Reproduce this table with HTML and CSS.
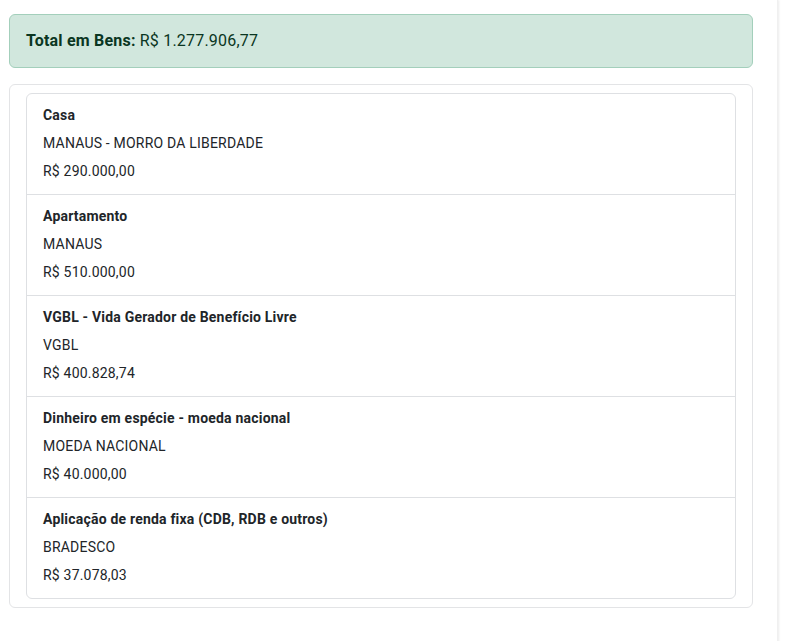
FILE: index.html
```html
<!DOCTYPE html>
<html lang="pt-BR">
  <head>
    <meta charset="UTF-8" />
    <meta name="viewport" content="width=device-width, initial-scale=1.0" />
    <title>Bens</title>
    <link rel="stylesheet" href="styles.css">
  </head>
  <body>
    <div class="page">
      <!-- Total -->
      <div class="alert-total">
        <strong>Total em Bens:</strong> R$ 1.277.906,77
      </div>

      <!-- Lista de bens -->
      <div class="card">
        <ul class="bens-list">
          <li class="bem">
            <p class="bem-title">Casa</p>
            <p>MANAUS - MORRO DA LIBERDADE</p>
            <p>R$ 290.000,00</p>
          </li>
          <li class="bem">
            <p class="bem-title">Apartamento</p>
            <p>MANAUS</p>
            <p>R$ 510.000,00</p>
          </li>
          <li class="bem">
            <p class="bem-title">VGBL - Vida Gerador de Benefício Livre</p>
            <p>VGBL</p>
            <p>R$ 400.828,74</p>
          </li>
          <li class="bem">
            <p class="bem-title">Dinheiro em espécie - moeda nacional</p>
            <p>MOEDA NACIONAL</p>
            <p>R$ 40.000,00</p>
          </li>
          <li class="bem">
            <p class="bem-title">Aplicação de renda fixa (CDB, RDB e outros)</p>
            <p>BRADESCO</p>
            <p>R$ 37.078,03</p>
          </li>
        </ul>
      </div>
    </div>
  </body>
</html>
```

FILE: styles.css
```css
body {
  margin: 0;
  background-color: #fff;
  color: #212529;
  font-family: Roboto, "Liberation Sans", Arial, sans-serif;
  letter-spacing: 0.2px;
}
.page {
  width: 744px;
  min-height: 641px;
  padding: 14px 24px 0 9px;
  box-shadow: 1px 0 2px rgba(0, 0, 0, 0.08);
  border-right: 1px solid #f0f0f0;
}
.alert-total {
  padding: 14px 16px;
  font-size: 16px;
  line-height: 24px;
  color: #0a3622;
  background-color: #d1e7dd;
  border: 1px solid #a3cfbb;
  border-radius: 6px;
  margin-bottom: 16px;
}
.card {
  padding: 8px 16px;
  border: 1px solid #e3e4e6;
  border-radius: 6px;
}
.bens-list {
  list-style: none;
  margin: 0;
  padding: 0;
  border: 1px solid #dee0e3;
  border-radius: 6px;
}
.bem {
  padding: 9px 16px 11px;
  font-size: 14px;
  line-height: 24px;
}
.bem + .bem {
  border-top: 1px solid #dee0e3;
}
.bem p {
  margin: 0 0 4px;
}
.bem p:last-child {
  margin-bottom: 0;
}
.bem-title {
  font-weight: bold;
}
```
